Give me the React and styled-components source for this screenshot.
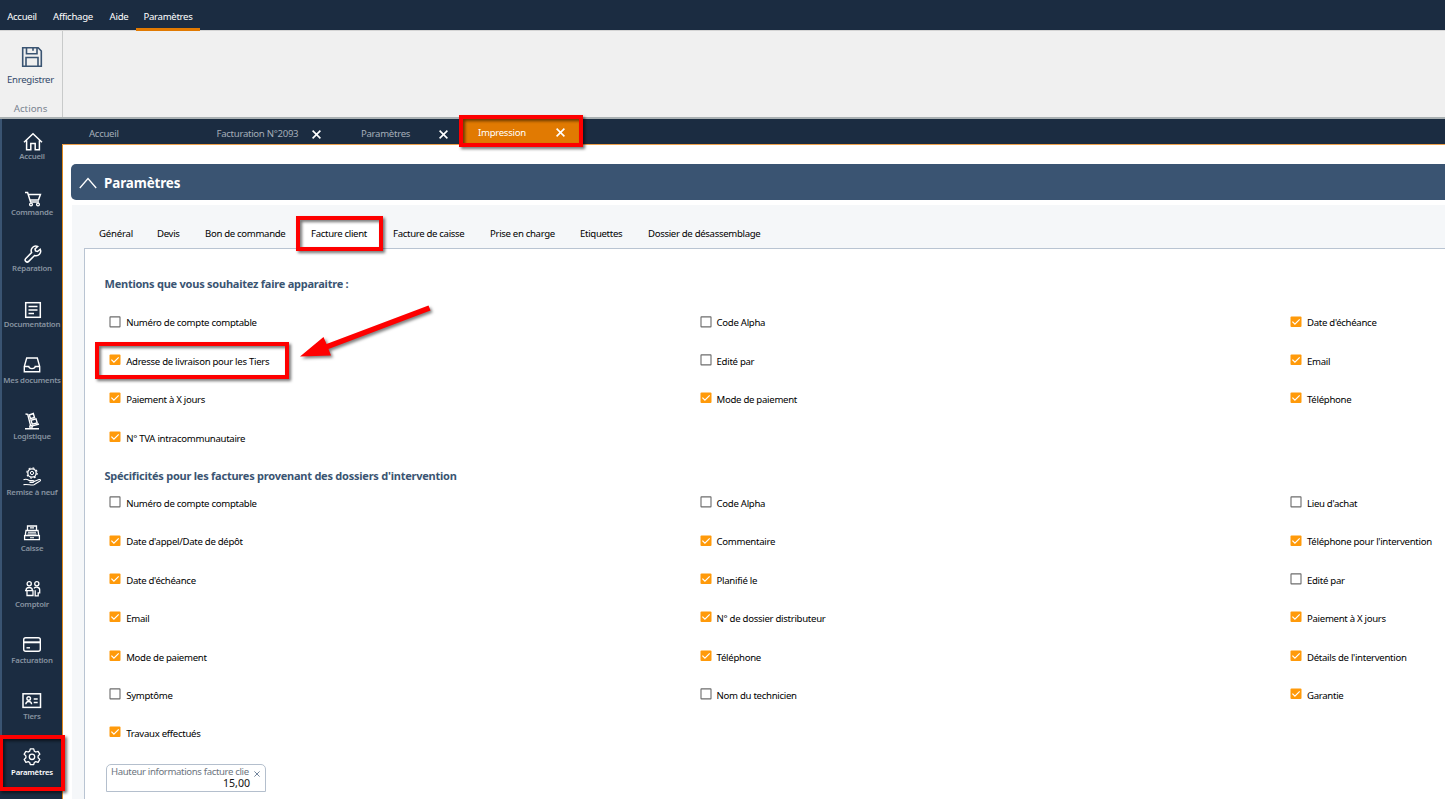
import styled, { createGlobalStyle, css } from "styled-components";

const GlobalStyle = createGlobalStyle`
  * {
    box-sizing: border-box;
  }
  body {
    margin: 0;
    overflow: hidden;
    background: #fff;
    font-family: "Noto Sans", "Open Sans", sans-serif;
    font-size: 9.6px;
    letter-spacing: -0.29px;
    color: #000;
  }
`;

const Window = styled.div`
  position: relative;
  display: flex;
  flex-direction: column;
  width: 1445px;
  height: 799px;
  overflow: hidden;
`;

const MenuBar = styled.nav`
  display: flex;
  flex: none;
  height: 30px;
  background: #1b2c41;
`;

const MenuItem = styled.span`
  flex: none;
  width: ${(p) => p.$w}px;
  height: 31px;
  line-height: 33px;
  text-align: center;
  white-space: nowrap;
  color: #fff;
  border-bottom: 3px solid ${(p) => (p.$active ? "#e17a02" : "transparent")};
  z-index: 1;
`;

const Ribbon = styled.div`
  display: flex;
  flex: none;
  height: 89px;
  background: #f0f0f0;
  border-top: 1px solid #d4d4d4;
  border-bottom: 2px solid #a9b0b2;
`;

const RibbonGroup = styled.div`
  display: flex;
  flex-direction: column;
  align-items: center;
  width: 63px;
  padding: 15px 1px 0 0;
  border-right: 1px solid #c8caca;
  color: #33496a;
  line-height: 14px;

  svg {
    margin: 0 0 5px 3px;
  }
  small {
    margin-top: 15px;
    font-size: 9.8px;
    letter-spacing: 0;
    color: #7b8491;
  }
`;

const Body = styled.div`
  display: flex;
  flex: 1;
  min-height: 0;
`;

const Sidebar = styled.aside`
  flex: none;
  width: 62px;
  background: #1b2c41;
`;

const SideItem = styled.div`
  display: flex;
  flex-direction: column;
  align-items: center;
  height: 56px;
  padding-top: 12px;
  border-left: 2px solid #3a5472;
  color: #8793a0;
  font-size: 7.8px;
  font-weight: 600;
  line-height: 10px;
  white-space: nowrap;
  letter-spacing: -0.22px;

  ${(p) =>
    p.$active &&
    css`
      height: 64px;
      border-left-color: #1b2c41;
      color: #fff;
    `}

  svg {
    flex: none;
    margin-bottom: -2px;
    color: #fff;
  }
`;

const Main = styled.main`
  display: flex;
  flex: 1;
  flex-direction: column;
  min-width: 0;
`;

const Work = styled.div`
  display: flex;
  flex: 1;
  flex-direction: column;
  border-left: 1px solid #e08a20;
`;

const DocTabs = styled.div`
  display: flex;
  flex: none;
  height: 26px;
  background: #1b2c41;
  border-bottom: 1px solid #eda04a;
`;

const DocTab = styled.div`
  display: flex;
  align-items: center;
  justify-content: space-between;
  width: ${(p) => p.$w}px;
  padding: 4px ${(p) => p.$pr || 0}px 0 ${(p) => p.$pl}px;
  color: #a4adb8;
  white-space: nowrap;

  svg {
    color: #fff;
    margin-top: 2px;
  }
  ${(p) =>
    p.$active &&
    css`
      padding-top: 2px;
      background: #e17a02;
      color: #fff;
      svg {
        margin-top: -1px;
      }
    `}
`;

const Header = styled.header`
  display: flex;
  flex: none;
  align-items: center;
  gap: 7px;
  height: 36px;
  margin: 19px 0 0 8px;
  padding: 1px 0 0 8px;
  border-radius: 5px 0 0 5px;
  background: #3a5472;
  color: #fff;
  font-size: 13.4px;
  font-weight: 700;
  letter-spacing: -0.1px;
`;

const Card = styled.section`
  display: flex;
  flex: 1;
  flex-direction: column;
  margin: 5px 0 0 9px;
  padding-left: 12px;
  background: #f5f7f9;
`;

const Tabs = styled.div`
  display: flex;
  flex: none;
  height: 43px;
  padding: 13px 0 0 2px;
`;

const Tab = styled.div`
  flex: none;
  width: ${(p) => p.$w}px;
  padding-left: 13px;
  line-height: 31px;
  white-space: nowrap;
  letter-spacing: ${(p) => p.$ls || -0.32}px;
  background: ${(p) => (p.$active ? "#fff" : "none")};
`;

const Pane = styled.div`
  flex: 1;
  padding: 25.4px 0 0 19.5px;
  background: #fff;
  border: solid #b9c4d2;
  border-width: 1px 0 0 1px;
`;

const Title = styled.h2`
  margin: 0;
  height: ${(p) => p.$h}px;
  line-height: 20px;
  padding-top: ${(p) => p.$pt || 0}px;
  color: #3a5472;
  font-size: 11px;
  font-weight: 700;
  letter-spacing: -0.235px;
`;

const Grid = styled.div`
  display: grid;
  grid-template-columns: repeat(3, 590.4px);
  grid-auto-rows: 38.4px;
  padding-left: 4.7px;
`;

const Check = styled.label`
  display: flex;
  align-items: center;
  gap: 5px;
  white-space: nowrap;

  span {
    padding-top: 2.6px;
  }
`;

const Field = styled.div`
  position: relative;
  width: 160px;
  height: 28px;
  margin: 12.6px 0 0 1.5px;
  padding: 0 15px 0 4px;
  border: 1px solid #b4bfcd;
  border-radius: 5px 5px 0 0;
  line-height: 13px;
  color: #6d7580;
  white-space: nowrap;

  div {
    letter-spacing: -0.36px;
  }
  b {
    display: block;
    line-height: 11px;
    font-size: 10.6px;
    font-weight: 400;
    letter-spacing: 0;
    text-align: right;
    color: #111;
  }
  svg {
    position: absolute;
    right: 5px;
    top: 6px;
    color: #73859c;
  }
`;

/* red frames laid over the screen */
const Frame = styled.div`
  position: absolute;
  z-index: 5;
  left: ${(p) => p.$x}px;
  top: ${(p) => p.$y}px;
  width: ${(p) => p.$w}px;
  height: ${(p) => p.$h}px;
  border: 4px solid #fe0000;
  filter: drop-shadow(2px 2px 1.5px rgba(0, 0, 0, 0.55));
`;

const Arrow = styled.svg`
  position: absolute;
  z-index: 5;
  left: 290px;
  top: 295px;
  filter: drop-shadow(2px 2px 1.5px rgba(0, 0, 0, 0.5));
`;

const Cross = ({ size = 9, stroke = 1.6 }) => (
  <svg width={size} height={size} viewBox="0 0 9 9" stroke="currentColor" strokeWidth={stroke}>
    <path d="M.6.6l7.8 7.8M8.4.6L.6 8.4" />
  </svg>
);

const Box = ({ on }) => (
  <svg width="12" height="12" viewBox="0 0 12 12" fill="none">
    {on ? (
      <>
        <rect x="0.5" y="0.5" width="11" height="10.6" rx="1" fill="#ff9a0a" />
        <path d="M2.4 5.6l2.5 2.5 4.8-4.8" stroke="#fff" strokeWidth="1.2" />
      </>
    ) : (
      <rect x="1" y="0.9" width="10" height="10" rx="0.4" stroke="#6c6c6c" strokeWidth="1.1" />
    )}
  </svg>
);

const icons = {
  home: <path d="M3 11.2L12 2.8l9 8.4M5.600 9.500v9.300h4.200v-6.400h4.400v6.400h4.200V9.500" strokeWidth="1.5" />,
  cart: (
    <>
      <path d="M4 5.5h2.6l3 9.6h8.4M7.2 7.6h12.2l-2 5.4H9" strokeWidth="1.5" />
      <circle cx="10" cy="17.5" r="1.4" />
      <circle cx="17" cy="17.5" r="1.4" />
    </>
  ),
  wrench: (
    <path d="M19.2 6.2l-2.7 2.3-2-.6-.5-2L16.600 3.500a4.600 4.600 0 0 0-6 6.100l-5.800 5.900a2 2 0 0 0 2.900 2.900l5.800-5.900a4.600 4.600 0 0 0 5.700-6.300zM6.300 16.900h.1" strokeWidth="1.5" />
  ),
  doc: (
    <>
      <rect x="4.700" y="3.700" width="14.600" height="14.600" strokeWidth="1.5" />
      <path d="M7.500 7.500h9M7.500 11h9M7.500 14.500h5.500" strokeWidth="1.4" />
    </>
  ),
  tray: (
    <path d="M5.700 3h10.600l2.400 8.500v5.300H3.300v-5.300zM3.300 11.500h4.500c.3 2.800 6.100 2.800 6.400 0h4.500" strokeWidth="1.4" />
  ),
  truck: (
    <>
      <path d="M4.500 3l2.200.3 3 11.700M4 17.800h14M10.500 15.200l7.500-2.200" strokeWidth="1.4" />
      <path d="M8.300 4l4-1.500 1.200 4-4 1.200zM10 9.200l5-1.300 1.200 4-5 1.300z" strokeWidth="1.4" />
      <circle cx="10" cy="15.800" r="1.300" />
    </>
  ),
  renew: (
    <>
      <circle cx="11" cy="6" r="4.200" strokeWidth="1.300" />
      <circle cx="11" cy="6" r="5.200" strokeWidth="1.100" strokeDasharray="1.900 2.180" />
      <circle cx="11" cy="6" r="1.600" strokeWidth="1" />
      <path d="M2.500 12.800c3-1.500 4.500 0 6 .8h3.500c1.500.2 1 1.800-.2 1.800H8.500M12.500 14.800l5.500-2.300c1.500-.3 2 .8 1 1.500L13 17.800c-3.500 1-5-1-10.500-.2" strokeWidth="1.100" />
    </>
  ),
  register: (
    <>
      <path d="M6.500 7V3h9v4M5 7.500h12l.8 5H4.200zM3.600 12.700h14.800v4H3.600z" strokeWidth="1.300" />
      <path d="M7 9.200h8M6.600 11h8.800M9 4.900h4M9 14.800h4" strokeWidth="1.100" />
    </>
  ),
  people: (
    <>
      <circle cx="8.200" cy="4.800" r="2.100" />
      <circle cx="15.800" cy="4.800" r="2.100" />
      <path d="M5 11.500c0-4 6.400-4 6.400 0M4 11.700h8.500M6 12v4.500h6V12M13 9.300c1.500-1.800 5.700-1.500 5.700 1.500v3h-1.500v3h-3v-5.500" strokeWidth="1.300" />
    </>
  ),
  card: (
    <>
      <rect x="2.700" y="2.700" width="16.600" height="13.600" rx="2" strokeWidth="1.4" />
      <path d="M2.700 7.300h16.600" strokeWidth="2" />
      <path d="M5.500 12.800h3.500" strokeWidth="1.4" />
    </>
  ),
  id: (
    <>
      <rect x="2" y="2.800" width="17.500" height="13.600" strokeWidth="1.5" />
      <circle cx="7.700" cy="7.500" r="1.800" strokeWidth="1.4" />
      <path d="M4.800 13.300c.2-3.800 5.600-3.800 5.800 0M12.700 8h4M12.700 11.500h4" strokeWidth="1.4" />
    </>
  ),
  gear: (
    <>
      <path d="M9.300 1.800h3.400l.6 2.300 1.500.9 2.300-.7 1.700 2.900-1.700 1.700v1.800l1.700 1.700-1.700 2.900-2.300-.7-1.500.9-.6 2.200H9.300l-.6-2.200-1.500-.9-2.300.7-1.700-2.900 1.700-1.700V8.900L3.200 7.200l1.700-2.900 2.300.7 1.500-.9z" strokeLinejoin="round" />
      <circle cx="11" cy="9.800" r="2.700" />
    </>
  ),
};

const side = [
  ["home", "Accueil"],
  ["cart", "Commande"],
  ["wrench", "Réparation"],
  ["doc", "Documentation"],
  ["tray", "Mes documents"],
  ["truck", "Logistique"],
  ["renew", "Remise à neuf"],
  ["register", "Caisse"],
  ["people", "Comptoir"],
  ["card", "Facturation"],
  ["id", "Tiers"],
  ["gear", "Paramètres"],
];

const tabs = [
  ["Général", 58, -0.2],
  ["Devis", 48],
  ["Bon de commande", 106],
  ["Facture client", 82],
  ["Facture de caisse", 97],
  ["Prise en charge", 90],
  ["Etiquettes", 68],
  ["Dossier de désassemblage", 140],
];

const mentions = [
  ["Numéro de compte comptable", 0],
  ["Code Alpha", 0],
  ["Date d'échéance", 1],
  ["Adresse de livraison pour les Tiers", 1],
  ["Edité par", 0],
  ["Email", 1],
  ["Paiement à X jours", 1],
  ["Mode de paiement", 1],
  ["Téléphone", 1],
  ["N° TVA intracommunautaire", 1],
];

const specs = [
  ["Numéro de compte comptable", 0],
  ["Code Alpha", 0],
  ["Lieu d'achat", 0],
  ["Date d'appel/Date de dépôt", 1],
  ["Commentaire", 1],
  ["Téléphone pour l'intervention", 1],
  ["Date d'échéance", 1],
  ["Planifié le", 1],
  ["Edité par", 0],
  ["Email", 1],
  ["N° de dossier distributeur", 1],
  ["Paiement à X jours", 1],
  ["Mode de paiement", 1],
  ["Téléphone", 1],
  ["Détails de l'intervention", 1],
  ["Symptôme", 0],
  ["Nom du technicien", 0],
  ["Garantie", 1],
  ["Travaux effectués", 1],
];

const Checks = ({ items }) => (
  <Grid>
    {items.map(([text, on], i) => (
      <Check key={i}>
        <Box on={on} />
        <span>{text}</span>
      </Check>
    ))}
  </Grid>
);

export default function App() {
  return (
    <Window>
      <GlobalStyle />
      <MenuBar>
        <MenuItem $w={44}>Accueil</MenuItem>
        <MenuItem $w={58}>Affichage</MenuItem>
        <MenuItem $w={34}>Aide</MenuItem>
        <MenuItem $w={64} $active>
          Paramètres
        </MenuItem>
      </MenuBar>
      <Ribbon>
        <RibbonGroup>
          <svg width="22" height="22" viewBox="0 0 22 22" fill="none" stroke="#3a5472" strokeWidth="1.6">
            <path d="M1.700 1.700h15.500l3.100 3.300v15.300H1.700zM5.500 1.700v6h10.500v-6M12 2v2.800M5 20v-8.500h12V20M5 11.500h12" />
          </svg>
          Enregistrer
          <small>Actions</small>
        </RibbonGroup>
      </Ribbon>
      <Body>
        <Sidebar>
          {side.map(([icon, name]) => (
            <SideItem key={icon} $active={icon === "gear"}>
              <svg width="22" height="22" viewBox="0 0 22 22" fill="none" stroke="currentColor" strokeWidth="1.3">
                {icons[icon]}
              </svg>
              {name}
            </SideItem>
          ))}
        </Sidebar>
        <Main>
          <DocTabs>
            <DocTab $w={128} $pl={27}>
              Accueil
            </DocTab>
            <DocTab $w={145} $pl={26.500} $pr={14}>
              Facturation N°2093 <Cross />
            </DocTab>
            <DocTab $w={126} $pl={26} $pr={13}>
              Paramètres <Cross />
            </DocTab>
            <DocTab $w={120} $pl={17} $pr={16} $active>
              Impression <Cross />
            </DocTab>
          </DocTabs>
          <Work>
            <Header>
              <svg width="18" height="12" viewBox="0 0 18 12" fill="none" stroke="#fff" strokeWidth="1.3">
                <path d="M.8 11L9 1.500 17.200 11" />
              </svg>
              Paramètres
            </Header>
            <Card>
              <Tabs>
                {tabs.map(([name, w, ls]) => (
                  <Tab key={name} $w={w} $ls={ls} $active={name === "Facture client"}>
                    {name}
                  </Tab>
                ))}
              </Tabs>
              <Pane>
                <Title $h={28}>Mentions que vous souhaitez faire apparaitre :</Title>
                <Checks items={mentions} />
                <Title $h={27} $pt={9.6}>
                  Spécificités pour les factures provenant des dossiers d'intervention
                </Title>
                <Checks items={specs} />
                <Field>
                  <div>Hauteur informations facture clie</div>
                  <b>15,00</b>
                  <Cross size={6} stroke={1.5} />
                </Field>
              </Pane>
            </Card>
          </Work>
        </Main>
      </Body>
      <Frame $x={459} $y={115} $w={124} $h={32} />
      <Frame $x={296} $y={216} $w={87} $h={35} />
      <Frame $x={95} $y={342} $w={194} $h={37} />
      <Frame $x={-1} $y={735} $w={66} $h={56} />
      <Arrow width="150" height="70" viewBox="0 0 150 70" fill="#fe0000">
        <path d="M138.500 10.500L140.500 15.500 38.500 54 41 60.500 10 61.500 33.500 42 36.500 49z" />
      </Arrow>
    </Window>
  );
}
